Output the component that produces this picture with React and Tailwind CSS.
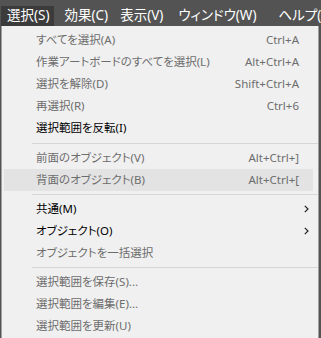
import React from "react";

const font = { fontFamily: '"Noto Sans", "Noto Sans CJK JP", sans-serif', fontFeatureSettings: '"palt"' };

function Item({ label, shortcut, enabled, arrow, hover }) {
  return (
    <div className={"flex h-[22px] items-center ml-[2px] mr-[5px] " + (hover ? "bg-[#e3e3e3]" : "")}>
      <div className={"flex-1 pl-[32px] text-[11.5px] leading-none whitespace-nowrap " + (enabled ? "text-black" : "text-[#6d6d6d]")}>{label}</div>
      {shortcut && <div className="text-[11.5px] leading-none text-[#6d6d6d] pr-[14px] whitespace-nowrap">{shortcut}</div>}
      {arrow && (
        <svg width="5" height="8" viewBox="0 0 5 8" className="mr-[4px]">
          <path d="M0.8 0.8 L4 4 L0.8 7.2" fill="none" stroke="#222" strokeWidth="1.2" />
        </svg>
      )}
    </div>
  );
}

function Sep({ tall }) {
  return (
    <div className={(tall ? "h-[8px]" : "h-[7px]") + " flex items-center pl-[30px]"}>
      <div className="h-px w-full bg-[#d6d6d6]" />
    </div>
  );
}

export default function App() {
  return (
    <div className="w-[321px] h-[338px] bg-[#535353] overflow-hidden" style={font}>
      <div className="h-[26px] flex items-end text-[13.5px] leading-none text-white whitespace-nowrap">
        <div className="ml-[1px] h-[20px] pl-[6px] pr-[4px] bg-[#3b3b3b] flex items-center shrink-0">選択(S)</div>
        <div className="pl-[11px] pr-[6px] h-[20px] flex items-center shrink-0">効果(C)</div>
        <div className="pl-[6px] pr-[6px] h-[20px] flex items-center shrink-0">表示(V)</div>
        <div className="pl-[9px] pr-[8px] h-[20px] flex items-center shrink-0">ウィンドウ(W)</div>
        <div className="pl-[14px] pr-[6px] h-[20px] flex items-center shrink-0">ヘルプ(H)</div>
      </div>
      <div className="ml-px w-[318px] h-[312px] bg-[#f0f0f0] border-l border-r border-[#a0a0a0] pt-[3px]">
        <Item label="すべてを選択(A)" shortcut="Ctrl+A" />
        <Item label="作業アートボードのすべてを選択(L)" shortcut="Alt+Ctrl+A" />
        <Item label="選択を解除(D)" shortcut="Shift+Ctrl+A" />
        <Item label="再選択(R)" shortcut="Ctrl+6" />
        <Item label="選択範囲を反転(I)" enabled />
        <Sep tall />
        <Item label="前面のオブジェクト(V)" shortcut="Alt+Ctrl+]" />
        <Item label="背面のオブジェクト(B)" shortcut="Alt+Ctrl+[" hover />
        <Sep />
        <Item label="共通(M)" enabled arrow />
        <Item label="オブジェクト(O)" enabled arrow />
        <Item label="オブジェクトを一括選択" />
        <Sep />
        <Item label="選択範囲を保存(S)..." />
        <Item label="選択範囲を編集(E)..." />
        <Item label="選択範囲を更新(U)" />
      </div>
    </div>
  );
}
